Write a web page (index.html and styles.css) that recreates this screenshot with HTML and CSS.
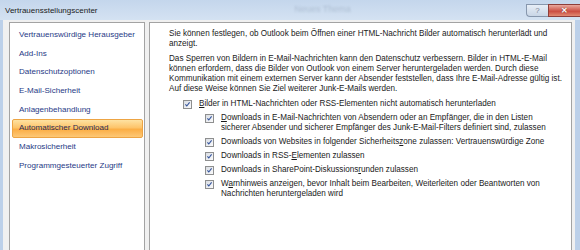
FILE: index.html
```html
<!DOCTYPE html>
<html lang="de">
<head>
  <meta charset="UTF-8" />
  <title>Vertrauensstellungscenter</title>
  <link rel="stylesheet" href="styles.css">
</head>
<body>
  <div class="window">
    <div class="titlebar">
      <span class="title">Vertrauensstellungscenter</span>
      <span class="ghost">Neues Thema</span>
      <div class="caption">
        <span class="cap help">?</span>
        <span class="cap close">&#x2715;</span>
      </div>
    </div>

    <div class="frame">
      <ul class="nav">
        <li>Vertrauenswürdige Herausgeber</li>
        <li>Add-Ins</li>
        <li>Datenschutzoptionen</li>
        <li>E-Mail-Sicherheit</li>
        <li>Anlagenbehandlung</li>
        <li class="active">Automatischer Download</li>
        <li>Makrosicherheit</li>
        <li>Programmgesteuerter Zugriff</li>
      </ul>

      <div class="pane">
        <p>Sie können festlegen, ob Outlook beim Öffnen einer HTML-Nachricht Bilder automatisch herunterlädt und<br>anzeigt.</p>
        <p>Das Sperren von Bildern in E-Mail-Nachrichten kann den Datenschutz verbessern. Bilder in HTML-E-Mail<br>können erfordern, dass die Bilder von Outlook von einem Server heruntergeladen werden. Durch diese<br>Kommunikation mit einem externen Server kann der Absender feststellen, dass Ihre E-Mail-Adresse gültig ist.<br>Auf diese Weise können Sie Ziel weiterer Junk-E-Mails werden.</p>

        <ul class="opts">
          <li>
            <span class="cb"><svg viewBox="0 0 9 9"><path d="M1.8 4.3 L3.6 6.4 L7.2 1.8" /></svg></span>
            <span><u>B</u>ilder in HTML-Nachrichten oder RSS-Elementen nicht automatisch herunterladen</span>
          </li>
          <li class="sub">
            <span class="cb"><svg viewBox="0 0 9 9"><path d="M1.8 4.3 L3.6 6.4 L7.2 1.8" /></svg></span>
            <span><u>D</u>ownloads in E-Mail-Nachrichten von Absendern oder an Empfänger, die in den Listen<br>sicherer Absender und sicherer Empfänger des Junk-E-Mail-Filters definiert sind, zulassen</span>
          </li>
          <li class="sub">
            <span class="cb"><svg viewBox="0 0 9 9"><path d="M1.8 4.3 L3.6 6.4 L7.2 1.8" /></svg></span>
            <span>Downloads von Websites in folgender Sicherheits<u>z</u>one zulassen: Vertrauenswürdige Zone</span>
          </li>
          <li class="sub">
            <span class="cb"><svg viewBox="0 0 9 9"><path d="M1.8 4.3 L3.6 6.4 L7.2 1.8" /></svg></span>
            <span>Downloads in RSS-<u>E</u>lementen zulassen</span>
          </li>
          <li class="sub">
            <span class="cb"><svg viewBox="0 0 9 9"><path d="M1.8 4.3 L3.6 6.4 L7.2 1.8" /></svg></span>
            <span>Downloads in SharePoint-Diskussions<u>r</u>unden zulassen</span>
          </li>
          <li class="sub">
            <span class="cb"><svg viewBox="0 0 9 9"><path d="M1.8 4.3 L3.6 6.4 L7.2 1.8" /></svg></span>
            <span>W<u>a</u>rnhinweis anzeigen, bevor Inhalt beim Bearbeiten, Weiterleiten oder Beantworten von<br>Nachrichten heruntergeladen wird</span>
          </li>
        </ul>
      </div>
    </div>
  </div>
</body>
</html>
```

FILE: styles.css
```css
html, body { margin: 0; padding: 0; }
body { width: 580px; height: 250px; overflow: hidden; font-family: "Liberation Sans", Arial, sans-serif; font-size: 8.15px; background: #bcd0e9; }

.window { display: flex; flex-direction: column; height: 250px; }

/* aero title bar */
.titlebar { height: 20px; flex: none; display: flex; align-items: flex-start; background: linear-gradient(#c4d6ec, #d4e2f2); }
.title { padding: 6px 0 0 5px; font-size: 8px; color: #1b1b1b; }
.ghost { margin: 4px 0 0 197px; font-size: 9px; color: rgba(70, 85, 110, 0.22); filter: blur(1.2px); }
.caption { margin-left: auto; padding-top: 4px; display: flex; }
.cap { height: 13px; display: flex; align-items: center; justify-content: center; box-sizing: border-box; font-size: 8px; }
.help { width: 22px; border: 1px solid #8797ad; border-right: none; border-radius: 0 0 0 4px; background: linear-gradient(#e7eef7, #c9d6e6); color: #7d8797; }
.close { width: 32px; border: 1px solid #8d3e3a; border-right: none; background: linear-gradient(#e9a99f, #cf5a4e 50%, #c8443a 51%, #e18a72); color: #fff; font-weight: bold; text-shadow: 0 0 1px #5a1d18; }

/* dialog body */
.frame { flex: 1; display: flex; gap: 4px; margin: 0 5px 0 3px; padding: 2px 3px 0 6px; background: #f0f0f0; }

.nav { width: 136px; box-sizing: border-box; margin: 0; padding: 3px 1px 0 2px; list-style: none; background: #fff; border: 1px solid #a3a3a3; border-bottom: none; font-size: 8.05px; }
.nav li { height: 18.7px; line-height: 18.7px; padding-left: 7px; box-sizing: border-box; color: #283a86; border-radius: 2px; }
.nav li.active { background: linear-gradient(#fee2a2, #fdc46a 45%, #fbae45 55%, #fdc877); border: 1px solid #eda444; padding-left: 6px; line-height: 16.7px; color: #2a2a52; }

.pane { flex: 1; padding: 6px 8px 0 19px; background: #fff; border: 1px solid #a3a3a3; border-bottom: none; color: #1a1a1a; line-height: 10px; white-space: nowrap; }
.pane p { margin: 0 0 5px; }

.opts { list-style: none; margin: 4px 0 0 14px; padding: 0; }
.opts li { display: flex; gap: 7px; margin-bottom: 4px; }
.opts li.sub { margin-left: 22px; }
.opts u { text-decoration-thickness: 1px; text-underline-offset: 1px; }

.cb { flex: none; width: 9px; height: 9px; margin-top: 0.5px; box-sizing: border-box; border: 1px solid #8e8f8f; background: linear-gradient(135deg, #d9dde3, #fbfbfc); display: flex; }
.cb svg { width: 7px; height: 7px; }
.cb path { fill: none; stroke: #34549c; stroke-width: 1.4; }
```
